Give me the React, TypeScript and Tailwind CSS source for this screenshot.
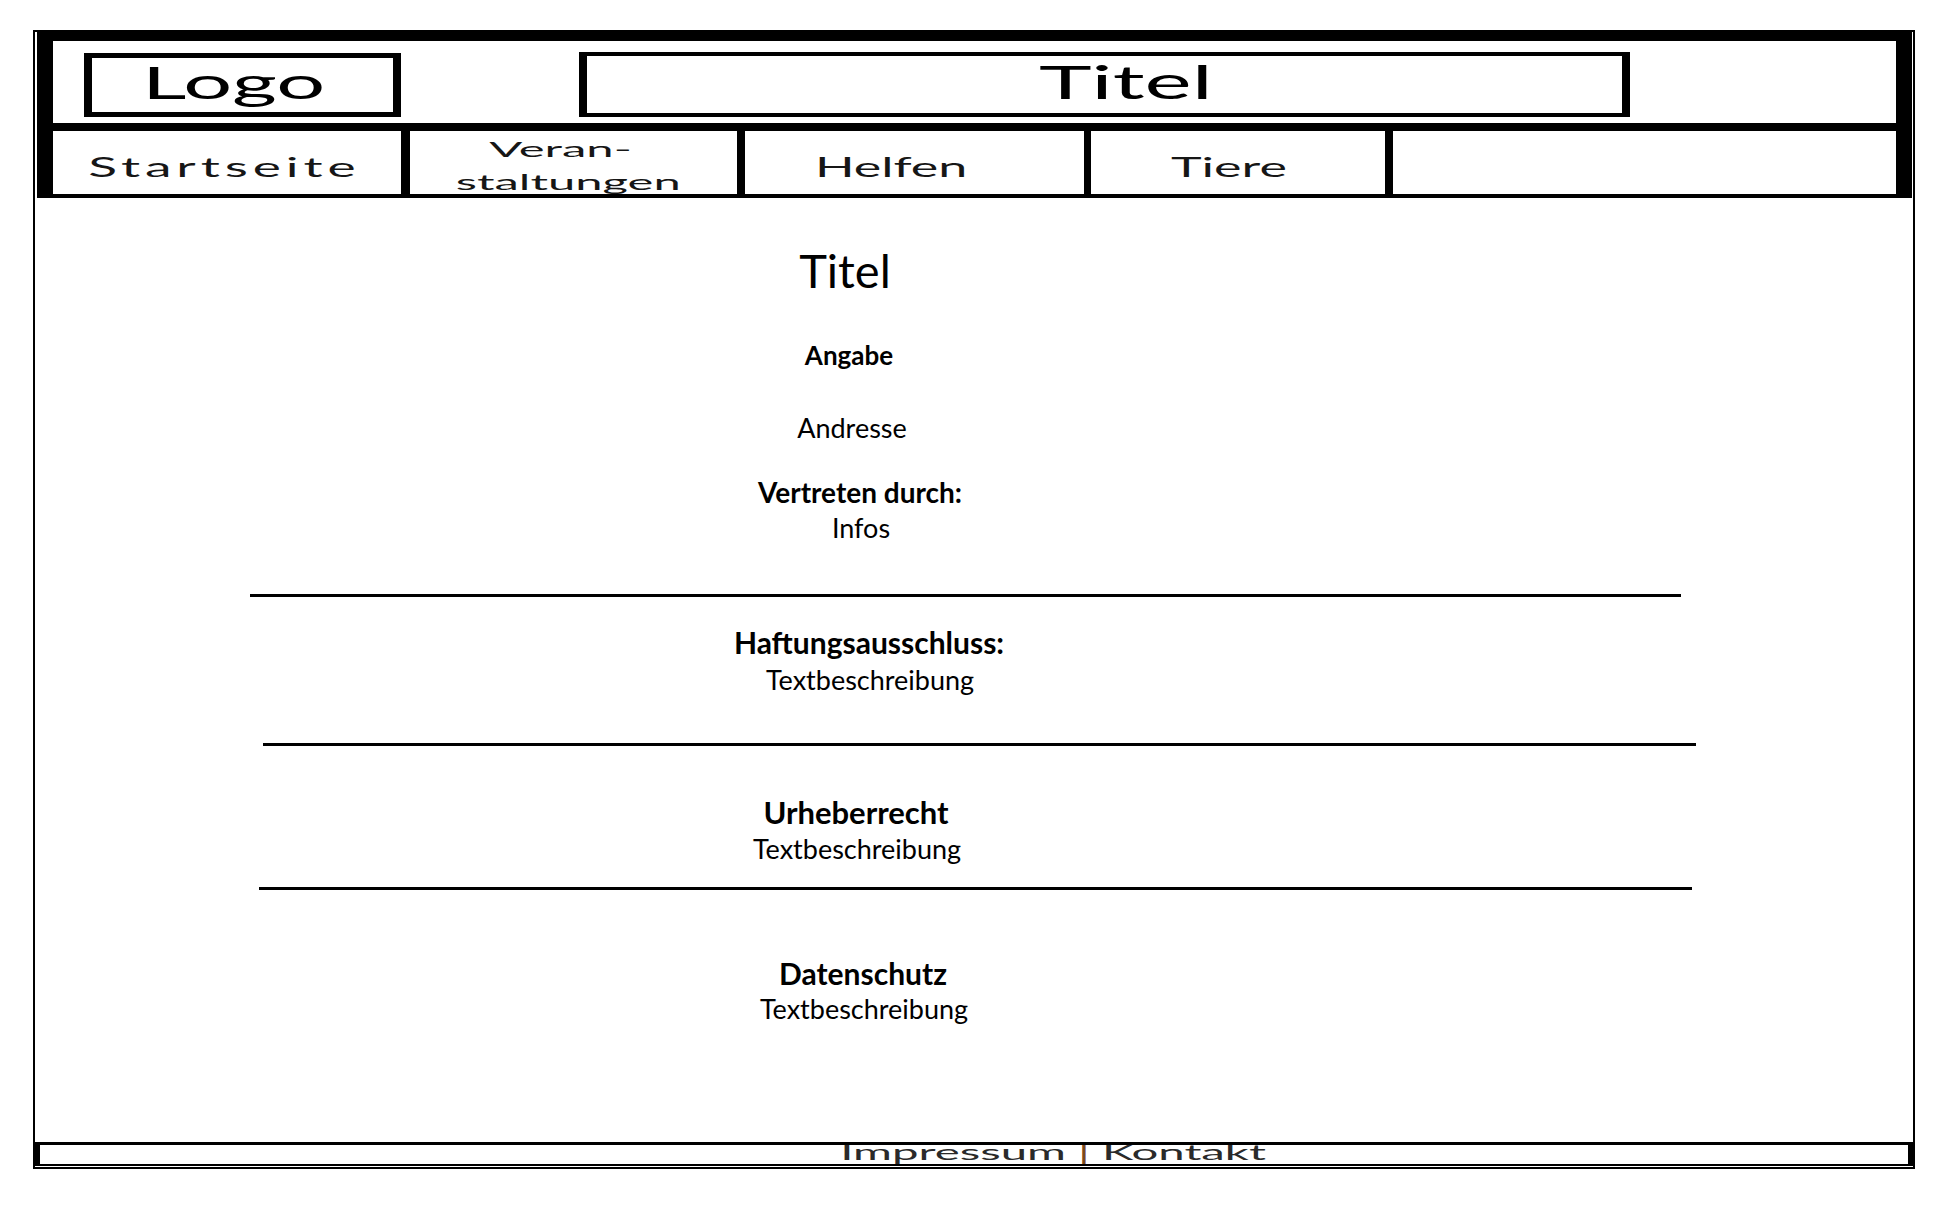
export default function App() {
  return (
    <div className="w-[1940px] h-[1220px] bg-white font-['Lato',sans-serif] text-black overflow-hidden">
      <div className="ml-[33px] mt-[30px] w-[1882px] h-[1139px] border-2 border-black flex flex-col">
        {/* Header */}
        <div className="ml-[2px] mr-[1px] border-l-[16px] border-r-[16px] border-t-[9px] border-black flex flex-col">
          <div className="h-[90px] border-b-[8px] border-black flex items-start">
            <div className="ml-[31px] mt-[12px] w-[317px] h-[64px] border-x-[8px] border-y-[5px] border-black flex justify-center pr-[18px]">
              <span className="inline-block mt-[2px] text-[45px] leading-none scale-x-[1.92]">Logo</span>
            </div>
            <div className="ml-[178px] mt-[11px] w-[1051px] h-[65px] border-x-[8px] border-y-[4px] border-black flex justify-center pl-[42px]">
              <span className="inline-block mt-[3px] text-[46px] leading-none scale-x-[1.94]">Titel</span>
            </div>
          </div>
          <div className="h-[67px] border-b-[4px] border-black flex text-[#161616]">
            <div className="w-[357px] border-r-[9px] border-black overflow-hidden flex justify-center pr-[6px] pt-[23px]">
              <span className="inline-block text-[26px] leading-none tracking-[2.4px] scale-x-[2.05]">Startseite</span>
            </div>
            <div className="w-[335px] border-r-[8px] border-black overflow-hidden flex flex-col pt-[1px]">
              <div className="flex justify-center pr-[25px]">
                <span className="inline-block text-[21px] leading-[33px] scale-x-[2.33]">Veran-</span>
              </div>
              <div className="flex justify-center pr-[10px]">
                <span className="inline-block text-[21px] leading-[33px] scale-x-[2.33]">staltungen</span>
              </div>
            </div>
            <div className="w-[346px] border-r-[7px] border-black overflow-hidden flex justify-center pr-[47px] pt-[23px]">
              <span className="inline-block text-[26px] leading-none scale-x-[2]">Helfen</span>
            </div>
            <div className="w-[302px] border-r-[8px] border-black overflow-hidden flex justify-center pr-[18px] pt-[23px]">
              <span className="inline-block text-[26px] leading-none scale-x-[2]">Tiere</span>
            </div>
            <div className="flex-1" />
          </div>
        </div>

        {/* Main */}
        <div className="h-[944px] flex flex-col text-center">
          <p className="mt-[49px] pr-[258px] text-[47px] leading-none">Titel</p>
          <p className="mt-[48px] pr-[250px] text-[26px] leading-none font-bold">Angabe</p>
          <p className="mt-[46px] pr-[244px] text-[27px] leading-none">Andresse</p>
          <p className="mt-[37px] pr-[228px] text-[28px] leading-none font-bold">Vertreten durch:</p>
          <p className="mt-[8px] pr-[226px] text-[27px] leading-none">Infos</p>
          <div className="mt-[53px] ml-[215px] w-[1431px] h-[3px] bg-black" />
          <p className="mt-[30px] pr-[210px] text-[30px] leading-none font-bold">Haftungsausschluss:</p>
          <p className="mt-[9px] pr-[208px] text-[27px] leading-none">Textbeschreibung</p>
          <div className="mt-[50px] ml-[228px] w-[1433px] h-[3px] bg-black" />
          <p className="mt-[51px] pr-[236px] text-[31px] leading-none font-bold">Urheberrecht</p>
          <p className="mt-[7px] pr-[234px] text-[27px] leading-none">Textbeschreibung</p>
          <div className="mt-[25px] ml-[224px] w-[1433px] h-[3px] bg-black" />
          <p className="mt-[68px] pr-[222px] text-[30px] leading-none font-bold">Datenschutz</p>
          <p className="mt-[7px] pr-[220px] text-[27px] leading-none">Textbeschreibung</p>
        </div>

        {/* Footer */}
        <div className="h-[24px] border-l-[5px] border-r-[5px] border-t-[3px] border-b-[2px] border-black overflow-hidden flex justify-center pl-[158px]">
          <span className="inline-block mt-[-4px] text-[22px] leading-none scale-x-[2.15] text-[#2a2a2a] whitespace-pre">
            Impressum <span className="text-[#7a4a1e]">|</span> Kontakt
          </span>
        </div>
      </div>
    </div>
  );
}
